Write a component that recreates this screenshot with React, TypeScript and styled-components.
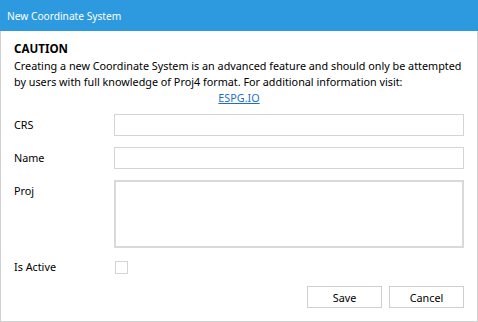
import styled, { createGlobalStyle } from 'styled-components';

const GlobalStyle = createGlobalStyle`
  html, body {
    margin: 0;
    padding: 0;
    background: #ffffff;
  }
  body {
    font-family: 'Noto Sans', 'Open Sans', sans-serif;
    font-size: 10.8px;
    color: #000000;
  }
`;

const Window = styled.div`
  width: 478px;
  height: 322px;
  display: flex;
  flex-direction: column;
  box-sizing: border-box;
`;

const TitleBar = styled.div`
  height: 31px;
  flex: none;
  background: #2d9ae0;
  color: #ffffff;
  display: flex;
  align-items: center;
  padding: 0 7px;
  font-size: 10.2px;
`;

const Body = styled.div`
  flex: 1;
  border: 1px solid #d2d2d2;
  border-top: none;
  padding: 9px 13px 13px 13px;
  display: flex;
  flex-direction: column;
`;

const Caution = styled.div`
  font-weight: bold;
  font-size: 11.6px;
  line-height: 18px;
`;

const Notice = styled.p`
  margin: 0;
  line-height: 16px;
  white-space: nowrap;
`;

const LinkLine = styled.div`
  text-align: center;
  line-height: 16px;
`;

const Link = styled.a`
  color: #1a6fcb;
  text-decoration: underline;
`;

const Form = styled.div`
  margin-top: 8px;
  display: grid;
  grid-template-columns: 100px 1fr;
  row-gap: 11px;
`;

const Label = styled.label<{ $compact?: boolean }>`
  line-height: ${(p) => (p.$compact ? '16px' : '22px')};
  height: ${(p) => (p.$compact ? '16px' : '22px')};
`;

const TextInput = styled.input`
  box-sizing: border-box;
  height: 22px;
  width: 100%;
  border: 1px solid #d4d4d4;
  margin: 0;
  padding: 0 4px;
  font: inherit;
`;

const TextArea = styled.textarea`
  box-sizing: border-box;
  height: 68px;
  width: 100%;
  border: 2px solid #d9d9d9;
  margin: 0;
  padding: 2px 4px;
  resize: none;
  font: inherit;
`;

const CheckCell = styled.div`
  height: 16px;
  display: flex;
  align-items: center;
`;

const CheckBox = styled.span`
  width: 13px;
  height: 13px;
  box-sizing: border-box;
  border: 1px solid #d4d4d4;
  margin-left: 1px;
  background: #ffffff;
`;

const Actions = styled.div`
  margin-top: auto;
  display: flex;
  justify-content: flex-end;
  gap: 7px;
`;

const Button = styled.button`
  width: 75px;
  height: 22px;
  box-sizing: border-box;
  background: #ffffff;
  border: 1px solid #cfcfcf;
  font: inherit;
  color: #000000;
  padding: 0;
`;

const App = () => {
  return (
    <>
      <GlobalStyle />
      <Window>
        <TitleBar>New Coordinate System</TitleBar>
        <Body>
          <Caution>CAUTION</Caution>
          <Notice>
            Creating a new Coordinate System is an advanced feature and should only be attempted
            <br />
            by users with full knowledge of Proj4 format. For additional information visit:
          </Notice>
          <LinkLine>
            <Link href="#">ESPG.IO</Link>
          </LinkLine>
          <Form>
            <Label>CRS</Label>
            <TextInput type="text" />
            <Label>Name</Label>
            <TextInput type="text" />
            <Label>Proj</Label>
            <TextArea />
            <Label $compact>Is Active</Label>
            <CheckCell>
              <CheckBox />
            </CheckCell>
          </Form>
          <Actions>
            <Button>Save</Button>
            <Button>Cancel</Button>
          </Actions>
        </Body>
      </Window>
    </>
  );
};

export default App;
